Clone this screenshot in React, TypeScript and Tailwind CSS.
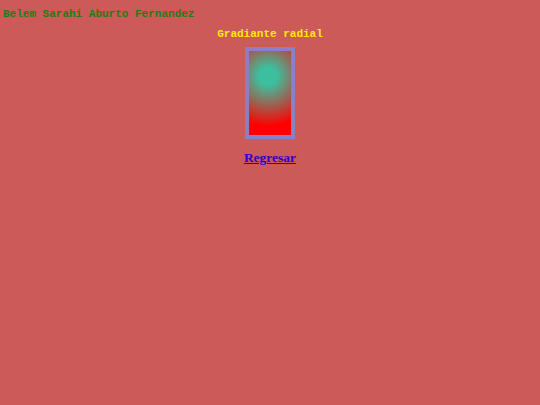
export default function App() {
    return (
        <div className="min-h-[405px] w-full bg-[#cb5a58]">
            <div className="pl-[3px] pt-[7px] font-['Liberation_Mono',monospace] text-[11px] font-bold leading-[14px] text-[#1e7d14]">
                Belem Sarahi Aburto Fernandez
            </div>
            <div className="flex flex-col items-center">
                <div className="mt-[6px] font-['Liberation_Mono',monospace] text-[11px] font-bold leading-[14px] text-[#ffea00]">
                    Gradiante radial
                </div>
                <div className="mt-[6px] h-[92px] w-[50px] border-4 border-[#8a80c6] bg-[radial-gradient(circle_at_45%_30%,#3cbf9e_9px,#ff0000_50px)]" />
                <a
                    href="#"
                    className="mt-[11px] font-['Liberation_Serif',serif] text-[13.5px] font-bold leading-[16px] text-[#2a00c8] underline"
                >
                    Regresar
                </a>
            </div>
        </div>
    );
}
